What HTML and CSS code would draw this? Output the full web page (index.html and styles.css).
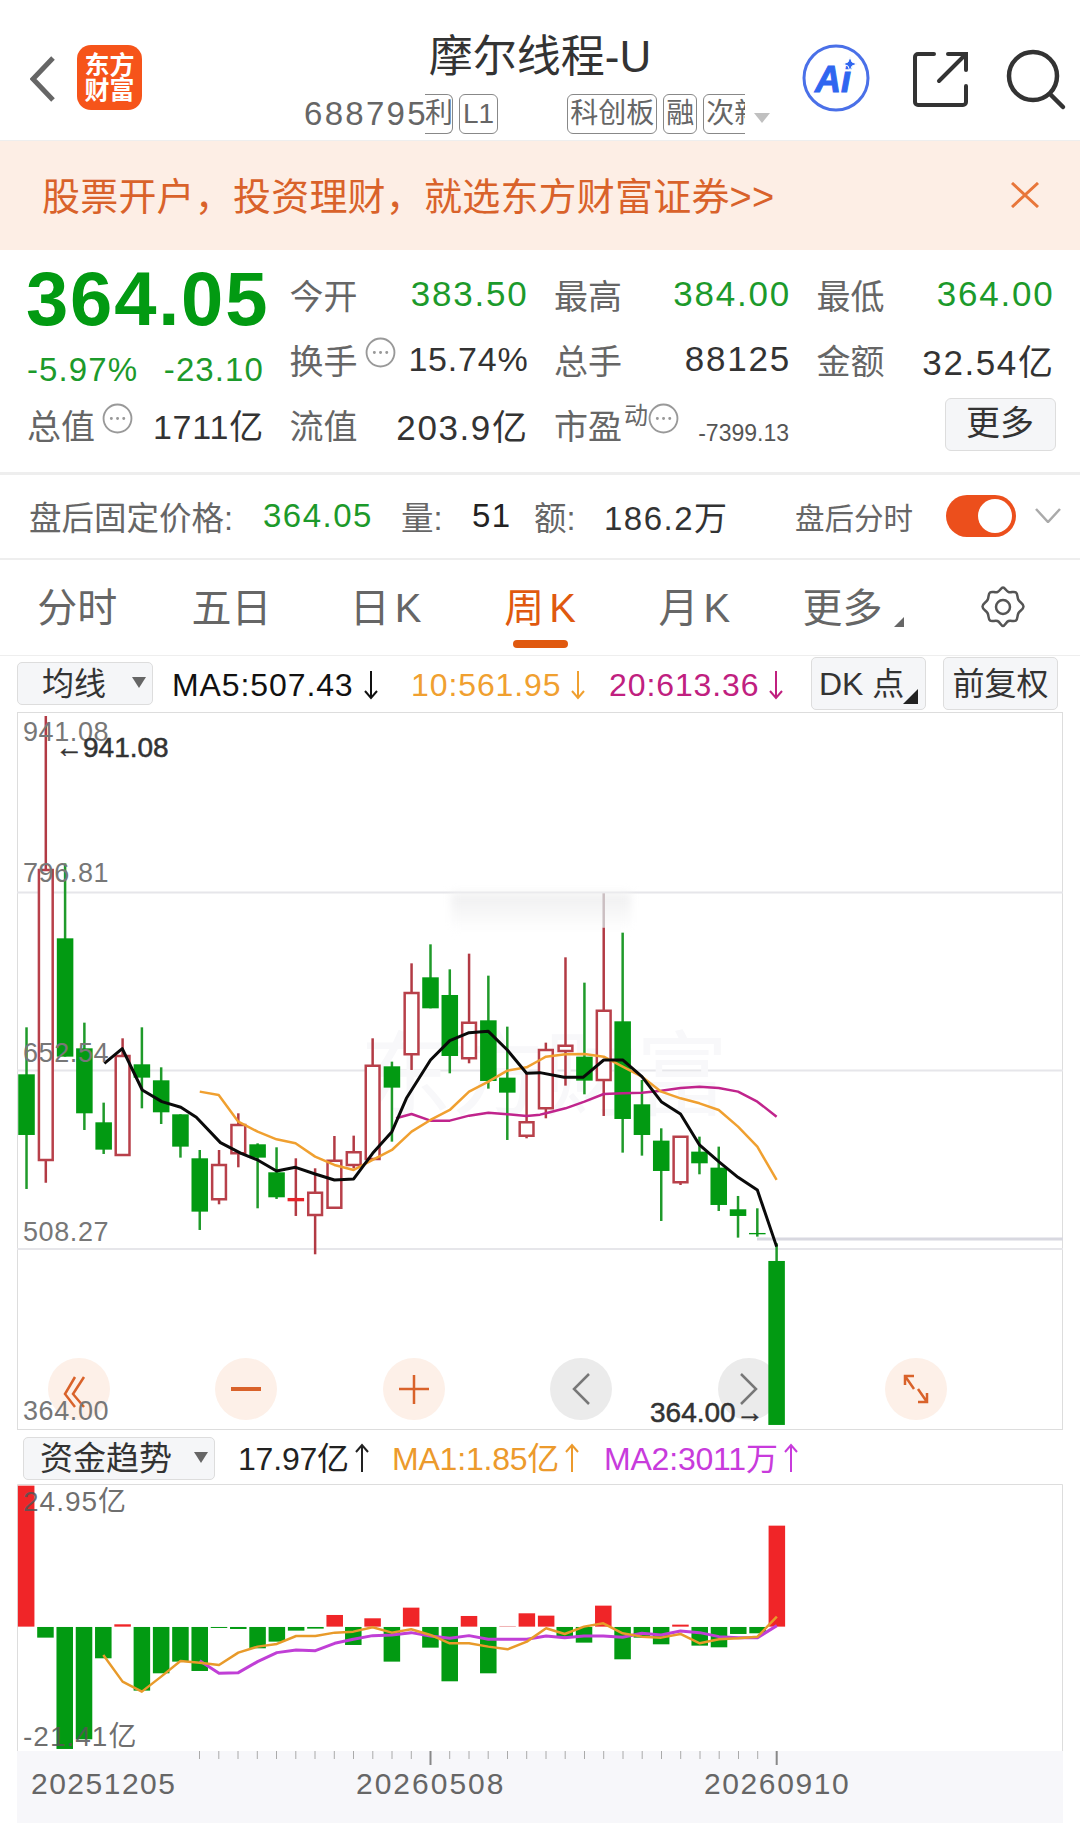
FILE: index.html
```html
<!DOCTYPE html>
<html lang="zh-CN">
<head>
<meta charset="utf-8">
<title>摩尔线程-U</title>
<link rel="stylesheet" href="styles.css">
</head>
<body>
<div class="page">
  <header class="header">
    <div class="h-left">
      <svg class="back" viewBox="0 0 26 48"><path d="M23 3 3 24l20 21"/></svg>
      <div class="logo">东方<br>财富</div>
    </div>
    <div class="h-mid">
      <div class="title">摩尔线程-U</div>
      <div class="code-row">
        <span class="code">688795</span>
        <div class="tags">
          <span class="tag tag-cut">利</span>
          <span class="tag tag-l1">L1</span>
          <span class="tag tag-far">科创板</span>
          <span class="tag">融</span>
          <span class="tag">次新</span>
        </div>
        <i class="tag-caret"></i>
      </div>
    </div>
    <div class="h-right">
      <svg class="ai" viewBox="0 0 68 68"><circle cx="34" cy="34" r="32"/><text x="13" y="48">Ai</text><path class="spark" d="M48 13l2 5 5 2-5 2-2 5-2-5-5-2 5-2z"/></svg>
      <svg class="share" viewBox="0 0 55 55"><path d="M21 2H5a3 3 0 0 0-3 3v45a3 3 0 0 0 3 3h45a3 3 0 0 0 3-3V34M35 2h18v16M52 3 26 29"/></svg>
      <svg class="search" viewBox="0 0 60 60"><circle cx="27" cy="26" r="24"/><path d="M44 44l13 13"/></svg>
    </div>
  </header>

  <div class="banner">
    <span>股票开户，投资理财，就选东方财富证券&gt;&gt;</span>
    <svg class="close" viewBox="0 0 28 26"><path d="M1 1l26 24M27 1 1 25"/></svg>
  </div>

  <section class="quote">
    <div class="price">364.05</div>
    <div class="cell"><span class="lab">今开</span><span class="val down">383.50</span></div>
    <div class="cell"><span class="lab">最高</span><span class="val down">384.00</span></div>
    <div class="cell"><span class="lab">最低</span><span class="val down">364.00</span></div>

    <div class="cell chg"><span class="val down">-5.97%</span><span class="val down">-23.10</span></div>
    <div class="cell"><span class="lab lab-i">换手<svg class="info" viewBox="0 0 30 30"><circle cx="15" cy="15" r="13.500"/><path d="M9 15h.1M15 15h.1M21 15h.1"/></svg></span><span class="val val-tight">15.74%</span></div>
    <div class="cell"><span class="lab">总手</span><span class="val">88125</span></div>
    <div class="cell"><span class="lab">金额</span><span class="val val-yi">32.54亿</span></div>

    <div class="cell"><span class="lab lab-i">总值<svg class="info" viewBox="0 0 30 30"><circle cx="15" cy="15" r="13.500"/><path d="M9 15h.1M15 15h.1M21 15h.1"/></svg></span><span class="val val-tight">1711亿</span></div>
    <div class="cell"><span class="lab">流值</span><span class="val val-yi">203.9亿</span></div>
    <div class="cell"><span class="lab lab-i">市盈<sup class="dyn">动</sup><svg class="info" viewBox="0 0 30 30"><circle cx="15" cy="15" r="13.500"/><path d="M9 15h.1M15 15h.1M21 15h.1"/></svg></span><span class="val-small">-7399.13</span></div>
    <div class="cell cell-end"><span class="more-btn">更多</span></div>
  </section>

  <section class="after">
    <span class="a-lab a-first">盘后固定价格:</span><span class="a-val down a-price">364.05</span>
    <span class="a-lab a-vol">量:</span><span class="a-val a-51">51</span>
    <span class="a-lab a-amt">额:</span><span class="a-val a-186">186.2万</span>
    <span class="a-switch-lab">盘后分时</span>
    <span class="toggle"><i></i></span>
    <svg class="a-chev" viewBox="0 0 26 15"><path d="M1 1l12 13L25 1"/></svg>
  </section>

  <nav class="tabs">
    <span class="tab">分时</span>
    <span class="tab">五日</span>
    <span class="tab tab-k">日K</span>
    <span class="tab tab-k tab-on">周K</span>
    <span class="tab tab-k">月K</span>
    <span class="tab tab-more">更多</span>
    <span class="tab"><svg class="gear" viewBox="0 0 44 42"><path d="M22 1.500c2 0 3 3.500 5.500 4.500s5.500-1 7.500.5 1 5 2.500 7.500 5 3.500 5 6.500-3.500 4-5 6.500-.5 6-2.500 7.500-5-.5-7.500.5-3.500 5-5.500 5-3-4-5.500-5-5.500 1-7.500-.5-1-5-2.500-7.500-5-3.500-5-6.500 3.500-4 5-6.500.5-6 2.500-7.500 5 .5 7.500-.5 3.500-4.500 5.500-4.500z"/><circle cx="22" cy="21" r="7"/></svg></span>
  </nav>

  <div class="ma-row main-row">
    <span class="select sel-ma">均线<i class="caret"></i></span>
    <span class="ma ma5">MA5:507.43<svg class="arrow" viewBox="0 0 16 30"><path d="M8 1v27M2 21l6 7 6-7"/></svg></span>
    <span class="ma ma10">10:561.95<svg class="arrow" viewBox="0 0 16 30"><path d="M8 1v27M2 21l6 7 6-7"/></svg></span>
    <span class="ma ma20">20:613.36<svg class="arrow" viewBox="0 0 16 30"><path d="M8 1v27M2 21l6 7 6-7"/></svg></span>
    <span class="btn btn-dk">DK 点<i></i></span>
    <span class="btn btn-fq">前复权</span>
  </div>

  <div class="plot plot-main">
    <div class="zoom-btns">
      <span class="zb"><svg viewBox="0 0 62 62"><path class="o" d="M27 19 17 36l10 13M36 19 25 36l11 13"/></svg></span>
      <span class="zb"><svg viewBox="0 0 62 62"><path class="o thick" d="M16 31h30"/></svg></span>
      <span class="zb"><svg viewBox="0 0 62 62"><path class="o" d="M16 31h30M31 17v29"/></svg></span>
      <span class="zb zb-grey"><svg viewBox="0 0 62 62"><path class="g" d="M39 16 24 31l15 15"/></svg></span>
      <span class="zb zb-grey"><svg viewBox="0 0 62 62"><path class="g" d="M23 16l15 15-15 15"/></svg></span>
      <span class="zb"><svg viewBox="0 0 62 62"><path class="o" d="M20 18l9 13M20 27v-9h9M42 44l-9-13M42 35v9h-9"/></svg></span>
    </div>
    <svg class="plot-svg" viewBox="17 712 1046 718">
      <defs>
        <linearGradient id="smear" x1="0" y1="0" x2="0" y2="1"><stop offset="0" stop-color="#efeff0"/><stop offset="1" stop-color="#fff"/></linearGradient>
      </defs>
      <rect class="frame" x="17.500" y="712.500" width="1045" height="717"/>
      <path class="grid" d="M17 892.500H1063M17 1070.500H1063M17 1249H1063"/>
      <path class="grid-strong" d="M757 1239H1063"/>
      <rect class="smear" x="451" y="893" width="180" height="38" fill="url(#smear)"/>
      <text class="mark" x="360" y="1108">东方财富</text>

      <g transform="translate(0 860) scale(.3444 .3333)">
        <path class="wg" d="M77 502V987"/><rect class="bg" x="53" y="643" width="48" height="182"/>
        <path class="wr" d="M133 -432V968"/><rect class="br" x="113" y="30" width="40" height="870"/>
        <path class="wg" d="M189 10V590"/><rect class="bg" x="165" y="235" width="48" height="355"/>
        <path class="wg" d="M245 488V810"/><rect class="bg" x="221" y="565" width="48" height="195"/>
        <path class="wg" d="M301 728V882"/><rect class="bg" x="277" y="787" width="48" height="82"/>
        <path class="wr" d="M356 535V885"/><rect class="br" x="336" y="588" width="40" height="297"/>
        <path class="wg" d="M412 502V745"/><rect class="bg" x="388" y="613" width="48" height="40"/>
        <path class="wg" d="M468 622V792"/><rect class="bg" x="444" y="661" width="48" height="96"/>
        <path class="wg" d="M524 763V893"/><rect class="bg" x="500" y="763" width="48" height="97"/>
        <path class="wg" d="M580 870V1110"/><rect class="bg" x="556" y="895" width="48" height="160"/>
        <path class="wr" d="M636 870V1033"/><rect class="br" x="616" y="915" width="40" height="103"/>
        <path class="wr" d="M692 760V922"/><rect class="br" x="672" y="795" width="40" height="85"/>
        <path class="wg" d="M748 850V1045"/><rect class="bg" x="724" y="853" width="48" height="40"/>
        <path class="wg" d="M803 862V1017"/><rect class="bg" x="779" y="937" width="48" height="75"/>
        <path class="wr" d="M859 895V1068"/><rect class="bf" x="835" y="1014" width="48" height="10"/>
        <path class="wr" d="M915 925V1183"/><rect class="br" x="895" y="998" width="40" height="67"/>
        <path class="wr" d="M971 828V1043"/><rect class="br" x="951" y="902" width="40" height="141"/>
        <path class="wr" d="M1027 827V925"/><rect class="br" x="1007" y="877" width="40" height="38"/>
        <path class="wr" d="M1082 535V900"/><rect class="br" x="1062" y="617" width="40" height="280"/>
        <path class="wg" d="M1138 605V845"/><rect class="bg" x="1114" y="619" width="48" height="64"/>
        <path class="wr" d="M1195 310V630"/><rect class="br" x="1175" y="399" width="40" height="184"/>
        <path class="wg" d="M1250 253V445"/><rect class="bg" x="1226" y="352" width="48" height="93"/>
        <path class="wg" d="M1306 328V640"/><rect class="bg" x="1282" y="405" width="48" height="183"/>
        <path class="wr" d="M1362 281V610"/><rect class="br" x="1342" y="488" width="40" height="107"/>
        <path class="wg" d="M1418 347V686"/><rect class="bg" x="1394" y="481" width="48" height="182"/>
        <path class="wg" d="M1473 500V840"/><rect class="bg" x="1449" y="653" width="48" height="45"/>
        <path class="wr" d="M1529 640V835"/><rect class="br" x="1509" y="787" width="40" height="40"/>
      </g>
      <g transform="translate(540 860) scale(.3444 .3333)">
        <path class="wr" d="M17 548V775"/><rect class="br" x="-3" y="570" width="40" height="175"/>
        <path class="wr" d="M74 292V677"/><rect class="br" x="54" y="557" width="40" height="16"/>
        <path class="wg" d="M129 368V703"/><rect class="bg" x="105" y="590" width="48" height="72"/>
        <path class="wfade" d="M185 100V203"/><path class="wr" d="M185 203V768"/><rect class="br" x="165" y="452" width="40" height="208"/>
        <path class="wg" d="M240 218V878"/><rect class="bg" x="216" y="484" width="48" height="293"/>
        <path class="wg" d="M296 660V887"/><rect class="bg" x="272" y="733" width="48" height="92"/>
        <path class="wg" d="M352 805V1083"/><rect class="bg" x="328" y="842" width="48" height="91"/>
        <path class="wr" d="M408 828V975"/><rect class="br" x="388" y="830" width="40" height="137"/>
        <path class="wg" d="M463 830V943"/><rect class="bg" x="439" y="875" width="48" height="35"/>
        <path class="wg" d="M519 860V1053"/><rect class="bg" x="495" y="923" width="48" height="112"/>
        <path class="wg" d="M575 1008V1133"/><rect class="bg" x="551" y="1048" width="48" height="20"/>
        <path class="wg" d="M631 1045V1130"/><rect class="bg" x="607" y="1119" width="48" height="4"/>
        <path class="wg" d="M687 1150V1204"/><rect class="bg" x="663" y="1203" width="48" height="492"/>
      </g>

      <g transform="translate(0 860) scale(.3444 .3333)">
        <path class="ln ma20-l" d="M1150 775 1195 762 1250 782 1306 782 1362 767 1418 758 1473 763 1529 768 1568 764 1585 760 1642 745 1697 725 1753 702 1808 700 1864 698 1920 692 1976 684 2031 680 2087 684 2143 695 2199 725 2255 770"/>
        <path class="ln ma10-l" d="M580 695 635 705 692 785 748 815 803 838 858 850 915 890 971 915 1027 930 1082 900 1138 870 1195 815 1250 780 1306 750 1362 695 1418 665 1473 632 1529 622 1568 600 1585 590 1642 583 1697 582 1753 590 1808 620 1864 650 1920 695 1976 715 2031 730 2087 750 2143 800 2199 860 2255 960"/>
        <path class="ln ma5-l" d="M303 610 355 566 385 630 413 690 470 725 525 742 570 772 640 848 700 880 748 900 803 933 858 922 915 942 971 960 1027 957 1082 880 1138 815 1180 715 1250 600 1306 542 1362 518 1418 514 1473 570 1529 640 1568 638 1638 652 1693 652 1753 600 1808 600 1864 650 1920 725 1976 762 2031 855 2087 905 2143 952 2199 990 2255 1160"/>
      </g>

      <text class="axis" x="23" y="741">941.08</text>
      <text class="axis" x="23" y="882">796.81</text>
      <text class="axis" x="23" y="1062">652.54</text>
      <text class="axis" x="23" y="1241">508.27</text>
      <text class="axis" x="23" y="1420">364.00</text>
      <text class="extreme" x="55" y="757">←941.08</text>
      <text class="extreme" x="650" y="1422">364.00→</text>
    </svg>
  </div>

  <div class="ma-row fund-row">
    <span class="select sel-fund">资金趋势<i class="caret"></i></span>
    <span class="ma f0">17.97亿<svg class="arrow" viewBox="0 0 16 30"><path d="M8 29V2M2 9l6-7 6 7"/></svg></span>
    <span class="ma f1">MA1:1.85亿<svg class="arrow" viewBox="0 0 16 30"><path d="M8 29V2M2 9l6-7 6 7"/></svg></span>
    <span class="ma f2">MA2:3011万<svg class="arrow" viewBox="0 0 16 30"><path d="M8 29V2M2 9l6-7 6 7"/></svg></span>
  </div>

  <div class="plot plot-fund">
    <svg class="plot-svg" viewBox="17 1484 1046 267">
      <path class="fund-frame" d="M17.500 1751V1484.500H1062.500V1751"/>
      <g transform="translate(0 1340) scale(.6887 .3333)">
        <rect class="up" x="26" y="437" width="24" height="423"/>
        <rect class="dn" x="54" y="861" width="24" height="32"/>
        <rect class="dn" x="82" y="861" width="24" height="366"/>
        <rect class="dn" x="110" y="861" width="24" height="337"/>
        <rect class="dn" x="138" y="861" width="24" height="94"/>
        <rect class="up" x="166" y="853" width="24" height="7"/>
        <rect class="dn" x="194" y="861" width="24" height="191"/>
        <rect class="dn" x="222" y="861" width="24" height="139"/>
        <rect class="dn" x="250" y="861" width="24" height="104"/>
        <rect class="dn" x="278" y="861" width="24" height="132"/>
        <rect class="dn" x="306" y="861" width="24" height="3"/>
        <rect class="dn" x="334" y="861" width="24" height="6"/>
        <rect class="dn" x="362" y="861" width="24" height="64"/>
        <rect class="dn" x="390" y="861" width="24" height="44"/>
        <rect class="dn" x="418" y="861" width="24" height="11"/>
        <rect class="dn" x="446" y="861" width="24" height="5"/>
        <rect class="up" x="474" y="825" width="24" height="35"/>
        <rect class="dn" x="501" y="861" width="24" height="54"/>
        <rect class="up" x="529" y="835" width="24" height="25"/>
        <rect class="dn" x="557" y="861" width="24" height="104"/>
        <rect class="up" x="585" y="803" width="24" height="57"/>
        <rect class="dn" x="613" y="861" width="24" height="62"/>
        <rect class="dn" x="641" y="861" width="24" height="163"/>
        <rect class="up" x="669" y="828" width="24" height="32"/>
        <rect class="dn" x="697" y="861" width="24" height="139"/>
        <rect class="thin" x="725" y="858" width="24" height="2"/>
        <rect class="up" x="753" y="820" width="24" height="40"/>
        <rect class="up" x="781" y="827" width="24" height="33"/>
        <rect class="dn" x="808" y="861" width="24" height="29"/>
        <rect class="dn" x="836" y="861" width="24" height="47"/>
        <rect class="up" x="864" y="797" width="24" height="63"/>
        <rect class="dn" x="892" y="861" width="24" height="97"/>
        <rect class="dn" x="920" y="861" width="24" height="32"/>
        <rect class="dn" x="948" y="861" width="24" height="52"/>
        <rect class="up" x="976" y="854" width="24" height="6"/>
        <rect class="dn" x="1004" y="861" width="24" height="56"/>
        <rect class="dn" x="1032" y="861" width="24" height="61"/>
        <rect class="dn" x="1060" y="861" width="24" height="21"/>
        <rect class="dn" x="1088" y="861" width="24" height="19"/>
        <rect class="up" x="1116" y="557" width="24" height="303"/>
        <path class="ln f2-l" d="M290 962 318 1000 346 998 374 965 402 938 430 930 458 932 486 910 513 898 541 887 569 885 597 878 625 888 653 895 681 887 709 898 737 898 765 898 793 888 820 893 848 888 876 888 904 892 932 880 960 885 988 873 1016 878 1044 890 1072 893 1100 893 1128 857"/>
        <path class="ln f1-l" d="M150 945 178 1025 206 1055 234 1010 262 963 290 968 318 975 346 938 374 920 402 912 430 888 458 888 486 878 513 875 541 862 569 878 597 868 625 885 653 910 681 910 709 920 737 928 765 905 793 865 820 882 848 860 876 850 904 880 932 890 960 893 988 882 1016 910 1044 898 1072 895 1100 890 1128 830"/>
      </g>
      <text class="axis axis-over" x="23" y="1511">24.95亿</text>
      <text class="axis axis-over" x="23" y="1746">-21.41亿</text>
    </svg>
  </div>

  <div class="time-axis">
    <svg class="ticks" viewBox="17 1751 1046 16"><path class="minor" d="M199.500 1751v8M218.800 1751v8M238 1751v8M257.300 1751v8M276.500 1751v8M295.800 1751v8M315 1751v8M334.300 1751v8M353.500 1751v8M372.800 1751v8M392 1751v8M411.300 1751v8M449.700 1751v8M469 1751v8M488.200 1751v8M507.500 1751v8M526.700 1751v8M546 1751v8M565.200 1751v8M584.500 1751v8M603.700 1751v8M623 1751v8M642.200 1751v8M661.500 1751v8M680.700 1751v8M700 1751v8M719.200 1751v8M738.500 1751v8M757.700 1751v8"/><path class="major" d="M430.500 1751v14M776.700 1751v14"/></svg>
    <div class="dates">
      <span class="d1">20251205</span>
      <span class="d2">20260508</span>
      <span class="d3">20260910</span>
    </div>
  </div>
</div>
</body>
</html>
```

FILE: styles.css
```css
* { box-sizing: border-box; }
html, body { margin: 0; padding: 0; background: #fff; }
body { font-family: "Liberation Sans", "Noto Sans CJK SC", sans-serif; color: #222; }
.page { width: 1080px; height: 1823px; overflow: hidden; display: flex; flex-direction: column; }
i { display: block; font-style: normal; }

/* header */
.header { height: 141px; flex: none; display: grid; grid-template-columns: 300px 480px 300px; border-bottom: 1px solid #eee; }
.h-left { display: flex; align-items: flex-start; padding-left: 30px; }
.back { width: 26px; height: 48px; margin-top: 55px; fill: none; stroke: #666; stroke-width: 5; }
.logo { width: 65px; height: 65px; margin: 45px 0 0 21px; background: #f6541a; border-radius: 14px; color: #fff; font-size: 25px; line-height: 25px; font-weight: 700; text-align: center; padding-top: 8px; }
.h-mid { display: flex; flex-direction: column; }
.title { height: 50px; margin-top: 32px; line-height: 50px; text-align: center; font-size: 44px; color: #333; }
.code-row { display: flex; align-items: center; height: 40px; margin-top: 12px; padding-left: 4px; }
.code { width: 121px; flex: none; font-size: 33px; letter-spacing: 2.300px; color: #666; }
.tags { width: 320px; flex: none; height: 40px; display: flex; gap: 6px; overflow: hidden; }
.tag { flex: none; height: 40px; line-height: 37px; padding: 0 2px; font-size: 28px; color: #666; border: 1px solid #888; border-radius: 6px; white-space: nowrap; }
.tag-cut { width: 28px; border-left: 0; border-radius: 0 6px 6px 0; padding: 0; overflow: hidden; }
.tag-l1 { padding: 0 3px; }
.tag-far { margin-left: 63px; }
.tag-caret { margin: 8px 0 0 9px; width: 0; height: 0; border-left: 8px solid transparent; border-right: 8px solid transparent; border-top: 10px solid #c0c0c0; }
.h-right { display: flex; align-items: flex-start; padding: 44px 0 0 22px; }
.ai { width: 68px; height: 68px; fill: none; stroke: #4a70e8; stroke-width: 3; flex: none; }
.ai text { font-size: 36px; font-weight: 700; font-style: italic; fill: #2f66f0; stroke: #2f66f0; stroke-width: 1; }
.ai .spark { fill: #2f66f0; stroke: #fff; stroke-width: 1; }
.share { width: 55px; height: 55px; margin: 8px 0 0 43px; fill: none; stroke: #333; stroke-width: 4; stroke-linecap: round; flex: none; }
.search { width: 60px; height: 60px; margin: 6px 0 0 38px; fill: none; stroke: #333; stroke-width: 4.500; stroke-linecap: round; overflow: visible; flex: none; }

/* banner */
.banner { height: 109px; flex: none; display: flex; align-items: center; justify-content: space-between; padding: 0 41px 4px 42px; background: #fdeee5; color: #d9622a; font-size: 38px; letter-spacing: .2px; }
.close { width: 28px; height: 26px; margin-top: 2px; fill: none; stroke: #e8763a; stroke-width: 3; }

/* quote */
.down { color: #1c9a2b; }
.quote { height: 225px; flex: none; display: grid; grid-template-columns: 235px 237px 235px 236px; grid-template-rows: 64px 66px 65px; column-gap: 27.500px; padding: 12px 0 0 27px; border-bottom: 3px solid #eee; }
.price { font-size: 76px; line-height: 66px; font-weight: 700; color: #029a12; letter-spacing: 1.800px; white-space: nowrap; padding-top: 4px; margin-left: -1px; }
.cell { display: flex; align-items: center; justify-content: space-between; white-space: nowrap; }
.chg { padding-top: 22px; }
.chg .val { font-size: 33px; letter-spacing: 1.100px; }
.lab { font-size: 34px; color: #666; display: flex; align-items: center; }
.val { font-size: 35px; letter-spacing: 1.800px; margin-right: -2px; }
.val-tight { font-size: 34px; letter-spacing: .8px; }
.val-yi { letter-spacing: 1.600px; }
.quote .val:not(.down) { color: #333; }
.info { width: 31px; height: 31px; margin: -13px 0 0 7px; fill: none; stroke: #999; stroke-width: 1.800; }
.info path { stroke-width: 2.800; stroke-linecap: round; }
.lab-i .dyn { font-size: 24px; line-height: 24px; margin: -18px 0 0 2px; color: #666; }
.lab-i .dyn + .info { margin-left: 0; }
.val-small { font-size: 23px; color: #555; padding-top: 18px; }
.cell-end { justify-content: flex-end; margin-right: -3px; }
.more-btn { width: 111px; height: 53px; line-height: 49px; text-align: center; font-size: 34px; color: #333; background: #f5f6f8; border: 1px solid #ddd; border-radius: 6px; }

/* after hours */
.after { height: 85px; flex: none; display: flex; align-items: center; border-bottom: 2px solid #eee; padding: 0 0 2px 29px; white-space: nowrap; }
.a-lab { font-size: 32.500px; color: #666; }
.a-val { font-size: 33px; letter-spacing: 1.500px; }
.a-first { width: 234px; }
.a-price { width: 138px; }
.a-vol { width: 71px; }
.a-51 { width: 62px; }
.a-amt { width: 70px; }
.a-186 { width: 191px; color: #333; }
.a-switch-lab { font-size: 29.500px; color: #666; }
.toggle { width: 70px; height: 42px; margin-left: 33px; background: #ec4f1c; border-radius: 21px; padding: 4px 0 0 32px; }
.toggle i { width: 34px; height: 34px; background: #fff; border-radius: 50%; }
.a-chev { width: 26px; height: 15px; margin-left: 19px; fill: none; stroke: #aaa; stroke-width: 2.500; }

/* tabs */
.tabs { height: 96px; flex: none; display: grid; grid-template-columns: repeat(7, 1fr); border-bottom: 1px solid #eee; }
.tab { position: relative; display: flex; align-items: flex-start; justify-content: center; padding-top: 24px; font-size: 40px; line-height: 48px; color: #666; }
.tab-k { letter-spacing: 5px; padding-left: 5px; }
.tab-on { color: #e0590f; }
.tab-on::after { content: ""; position: absolute; left: 50%; top: 80px; width: 55px; height: 8px; margin-left: -27px; background: #e0590f; border-radius: 4px; }
.tab-more { padding-right: 12px; }
.tab-more::after { content: ""; position: absolute; left: 123px; top: 57px; border-left: 10px solid transparent; border-bottom: 10px solid #666; }
.gear { width: 44px; height: 42px; margin-top: 2px; fill: none; stroke: #555; stroke-width: 2.500; }

/* indicator rows */
.ma-row { height: 54px; flex: none; display: flex; align-items: flex-start; white-space: nowrap; }
.main-row { height: 56px; }
.select { position: relative; display: block; height: 43px; margin: 6px 0 0 17px; line-height: 43px; font-size: 32px; color: #333; background: #f5f6f8; border: 1px solid #ddd; border-radius: 5px; }
.sel-ma { width: 136px; padding-left: 24px; }
.caret { position: absolute; right: 6px; top: 14px; border-left: 7px solid transparent; border-right: 7px solid transparent; border-top: 11px solid #666; }
.ma { height: 56px; display: flex; align-items: flex-start; line-height: 58px; font-size: 32px; letter-spacing: .9px; }
.arrow { width: 16px; height: 30px; margin: 14px 0 0 9px; fill: none; stroke: currentColor; stroke-width: 2; }
.ma5 { margin-left: 19px; width: 239px; color: #111; }
.ma10 { width: 198px; color: #f0a030; }
.ma20 { width: 202px; color: #c0207f; }
.btn { position: relative; display: block; height: 53px; margin-top: 1px; line-height: 52px; font-size: 32px; text-align: center; color: #333; background: #f5f6f8; border: 1px solid #ddd; border-radius: 5px; }
.btn-dk { width: 115px; text-align: left; padding-left: 7px; }
.btn-dk i { position: absolute; right: 7px; bottom: 5px; border-left: 15px solid transparent; border-bottom: 15px solid #222; }
.btn-fq { width: 115px; margin-left: 17px; }

/* plots */
.plot { position: relative; flex: none; width: 1046px; margin-left: 17px; }
.plot-main { height: 718px; }
.plot-fund { height: 267px; }
.plot-svg { position: relative; display: block; width: 1046px; height: 100%; }
.zoom-btns { position: absolute; left: 31px; top: 646px; display: flex; gap: 105.400px; }
.zb { display: block; width: 62px; height: 62px; border-radius: 50%; background: #fdf0e8; }
.zb-grey { background: #ebebeb; }
.zb svg { display: block; width: 62px; height: 62px; fill: none; }
.zb .o { stroke: #d9622a; stroke-width: 2.500; }
.zb .thick { stroke-width: 4; }
.zb .g { stroke: #777; stroke-width: 2.500; }

.frame { fill: none; stroke: #ddd; stroke-width: 1; }
.grid { fill: none; stroke: #e6e6ea; stroke-width: 2; }
.grid-strong { fill: none; stroke: #d8d8e0; stroke-width: 3; }
.smear { filter: blur(4px); }
.mark { font-size: 92px; fill: #f8f8fa; }
.wg, .wr, .wfade, .br, .ln { vector-effect: non-scaling-stroke; fill: none; }
.wg { stroke: #1f9a2a; stroke-width: 2.500; }
.wr { stroke: #b23a44; stroke-width: 2.500; }
.wfade { stroke: #cbbfc2; stroke-width: 2.500; }
.bg { fill: #029a12; }
.br { fill: #fff; stroke: #b8404a; stroke-width: 2.500; }
.bf { fill: #e8232a; }
.ln { stroke-width: 2.500; stroke-linejoin: round; }
.ma5-l { stroke: #0a0a0a; stroke-width: 3; }
.ma10-l { stroke: #f0a030; }
.ma20-l { stroke: #c0248c; }
.axis { font-size: 27px; letter-spacing: .6px; fill: #777; }
.axis-over { font-size: 28px; letter-spacing: 1px; fill: #555; fill-opacity: .85; }
.extreme { font-size: 28px; fill: #333; stroke: #333; stroke-width: .5; }

/* fund */
.fund-row { height: 54px; }
.sel-fund { width: 192px; margin: 7px 0 0 23px; padding-left: 16px; font-size: 33px; line-height: 42px; }
.fund-row .ma { letter-spacing: -.2px; }
.fund-row .arrow { margin: 13px 0 0 5px; }
.f0 { margin-left: 23px; width: 154px; color: #222; }
.f1 { width: 212px; color: #ec9a2c; }
.f2 { color: #c83bdc; }
.fund-frame { fill: none; stroke: #ddd; stroke-width: 1; }
.up { fill: #f02528; }
.dn { fill: #029a12; }
.thin { fill: #e88a8c; }
.f1-l { stroke: #e89a2a; }
.f2-l { stroke: #c03fd6; stroke-width: 3; }

/* time axis */
.time-axis { flex: none; width: 1046px; height: 72px; margin-left: 17px; background: #f7f7fa; }
.ticks { display: block; width: 1046px; height: 16px; fill: none; }
.minor { stroke: #aaa; stroke-width: 1; }
.major { stroke: #888; stroke-width: 2; }
.dates { display: flex; height: 40px; margin-top: -3px; font-size: 30px; line-height: 40px; color: #666; }
.dates span { display: block; }
.d1 { margin-left: 14px; width: 325px; letter-spacing: 1.500px; }
.d2 { width: 348px; letter-spacing: 2px; }
.d3 { letter-spacing: 1.600px; }
```
